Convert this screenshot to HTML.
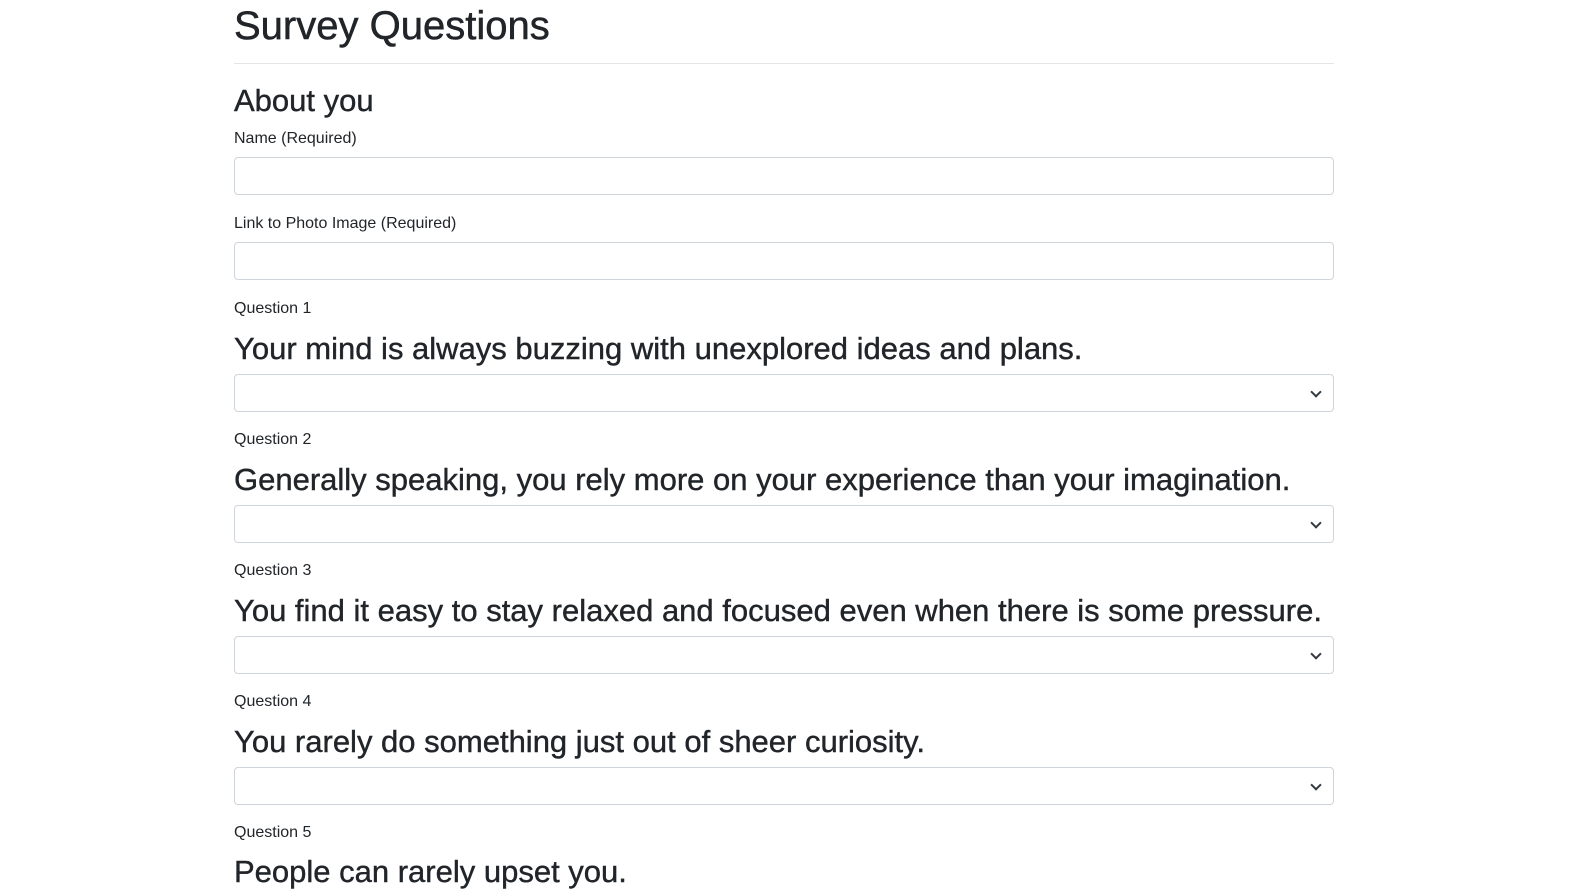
<!DOCTYPE html>
<html><head><meta charset="utf-8"><style>
body{margin:0;background:#fff;color:#212529;font-family:"Liberation Sans",Arial,sans-serif;width:1582px;height:896px;overflow:hidden;position:relative}
.a{position:absolute;left:234px;white-space:nowrap}
.h1{font-size:40px;line-height:48px;font-weight:500;-webkit-text-stroke:0.5px #212529}
.h2{font-size:31px;line-height:38px;font-weight:500;-webkit-text-stroke:0.4px #212529}
.lb{font-size:16px;line-height:24px}
.in{width:1100px;height:38px;box-sizing:border-box;border:1px solid #ced4da;border-radius:4px;background:#fff}
.sel::after{content:"";position:absolute;right:13px;top:13px;width:6px;height:6px;border-right:2px solid #343a40;border-bottom:2px solid #343a40;transform:rotate(45deg)}
hr{position:absolute;left:234px;top:63px;width:1100px;margin:0;border:0;border-top:1px solid #e5e5e5}
</style></head><body>
<div class="a h1" style="top:2px">Survey Questions</div>
<hr>
<div class="a h2" style="top:82px">About you</div>
<div class="a lb" style="top:127px">Name (Required)</div>
<div class="a in" style="top:157px"></div>
<div class="a lb" style="top:212px">Link to Photo Image (Required)</div>
<div class="a in" style="top:242px"></div>

<div class="a lb" style="top:297px">Question 1</div>
<div class="a h2" style="top:330px">Your mind is always buzzing with unexplored ideas and plans.</div>
<div class="a in sel" style="top:374px"></div>

<div class="a lb" style="top:428px">Question 2</div>
<div class="a h2" style="top:461px">Generally speaking, you rely more on your experience than your imagination.</div>
<div class="a in sel" style="top:505px"></div>

<div class="a lb" style="top:559px">Question 3</div>
<div class="a h2" style="top:592px">You find it easy to stay relaxed and focused even when there is some pressure.</div>
<div class="a in sel" style="top:636px"></div>

<div class="a lb" style="top:690px">Question 4</div>
<div class="a h2" style="top:723px">You rarely do something just out of sheer curiosity.</div>
<div class="a in sel" style="top:767px"></div>

<div class="a lb" style="top:821px">Question 5</div>
<div class="a h2" style="top:853px">People can rarely upset you.</div>
</body></html>
